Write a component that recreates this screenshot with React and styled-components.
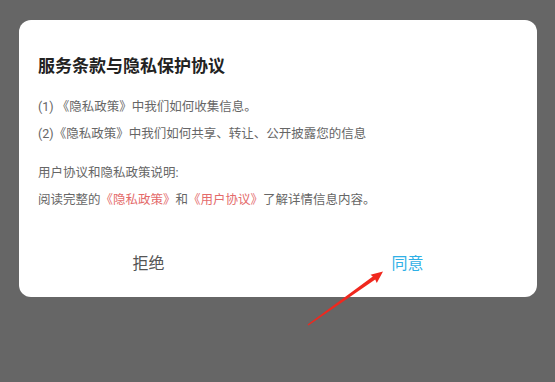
import React from 'react';
import styled, { createGlobalStyle } from 'styled-components';

const GlobalStyle = createGlobalStyle`
  html, body {
    margin: 0;
    padding: 0;
    background: #666666;
  }
  body {
    font-family: Roboto, "Noto Sans CJK SC", "Noto Sans", sans-serif;
  }
`;

const Page = styled.div`
  position: relative;
  width: 555px;
  height: 382px;
  padding: 20px 18px 0 19px;
  box-sizing: border-box;
  background: #666666;
`;

const Card = styled.div`
  display: flex;
  flex-direction: column;
  width: 518px;
  height: 277px;
  background: #ffffff;
  border-radius: 12px;
`;

const Content = styled.div`
  padding: 34px 19px 0;
`;

const Title = styled.h2`
  margin: 0 0 14.5px;
  font-size: 17px;
  line-height: 24px;
  font-weight: 700;
  color: #222222;
`;

const Group = styled.div`
  margin-bottom: 12.5px;
`;

const Line = styled.p`
  margin: 0;
  font-size: 12.5px;
  line-height: 27px;
  color: #666666;
  white-space: nowrap;
`;

const Link = styled.span`
  color: #e46a6a;
`;

const Footer = styled.div`
  display: flex;
  margin-top: auto;
  height: 70px;
`;

const Button = styled.button`
  flex: 1;
  border: none;
  background: none;
  padding: 0;
  font-family: inherit;
  font-size: 16px;
  color: ${p => (p.$primary ? '#2fb0e6' : '#555555')};
  cursor: pointer;
`;

const Arrow = styled.svg`
  position: absolute;
  left: 0;
  top: 0;
  pointer-events: none;
`;

export default function App() {
  return (
    <Page>
      <GlobalStyle />
      <Card>
        <Content>
          <Title>服务条款与隐私保护协议</Title>
          <Group>
            <Line>(1) 《隐私政策》中我们如何收集信息。</Line>
            <Line>(2)《隐私政策》中我们如何共享、转让、公开披露您的信息</Line>
          </Group>
          <Group>
            <Line>用户协议和隐私政策说明:</Line>
            <Line>
              阅读完整的<Link>《隐私政策》</Link>和<Link>《用户协议》</Link>了解详情信息内容。
            </Line>
          </Group>
        </Content>
        <Footer>
          <Button>拒绝</Button>
          <Button $primary>同意</Button>
        </Footer>
      </Card>
      <Arrow width="555" height="382" viewBox="0 0 555 382">
        <polygon
          points="307.6,324.6 372.8,276.4 370.5,274.8 383,271.5 376.8,283 375.2,279.6 308.4,325.4"
          fill="#f0281e"
        />
      </Arrow>
    </Page>
  );
}
